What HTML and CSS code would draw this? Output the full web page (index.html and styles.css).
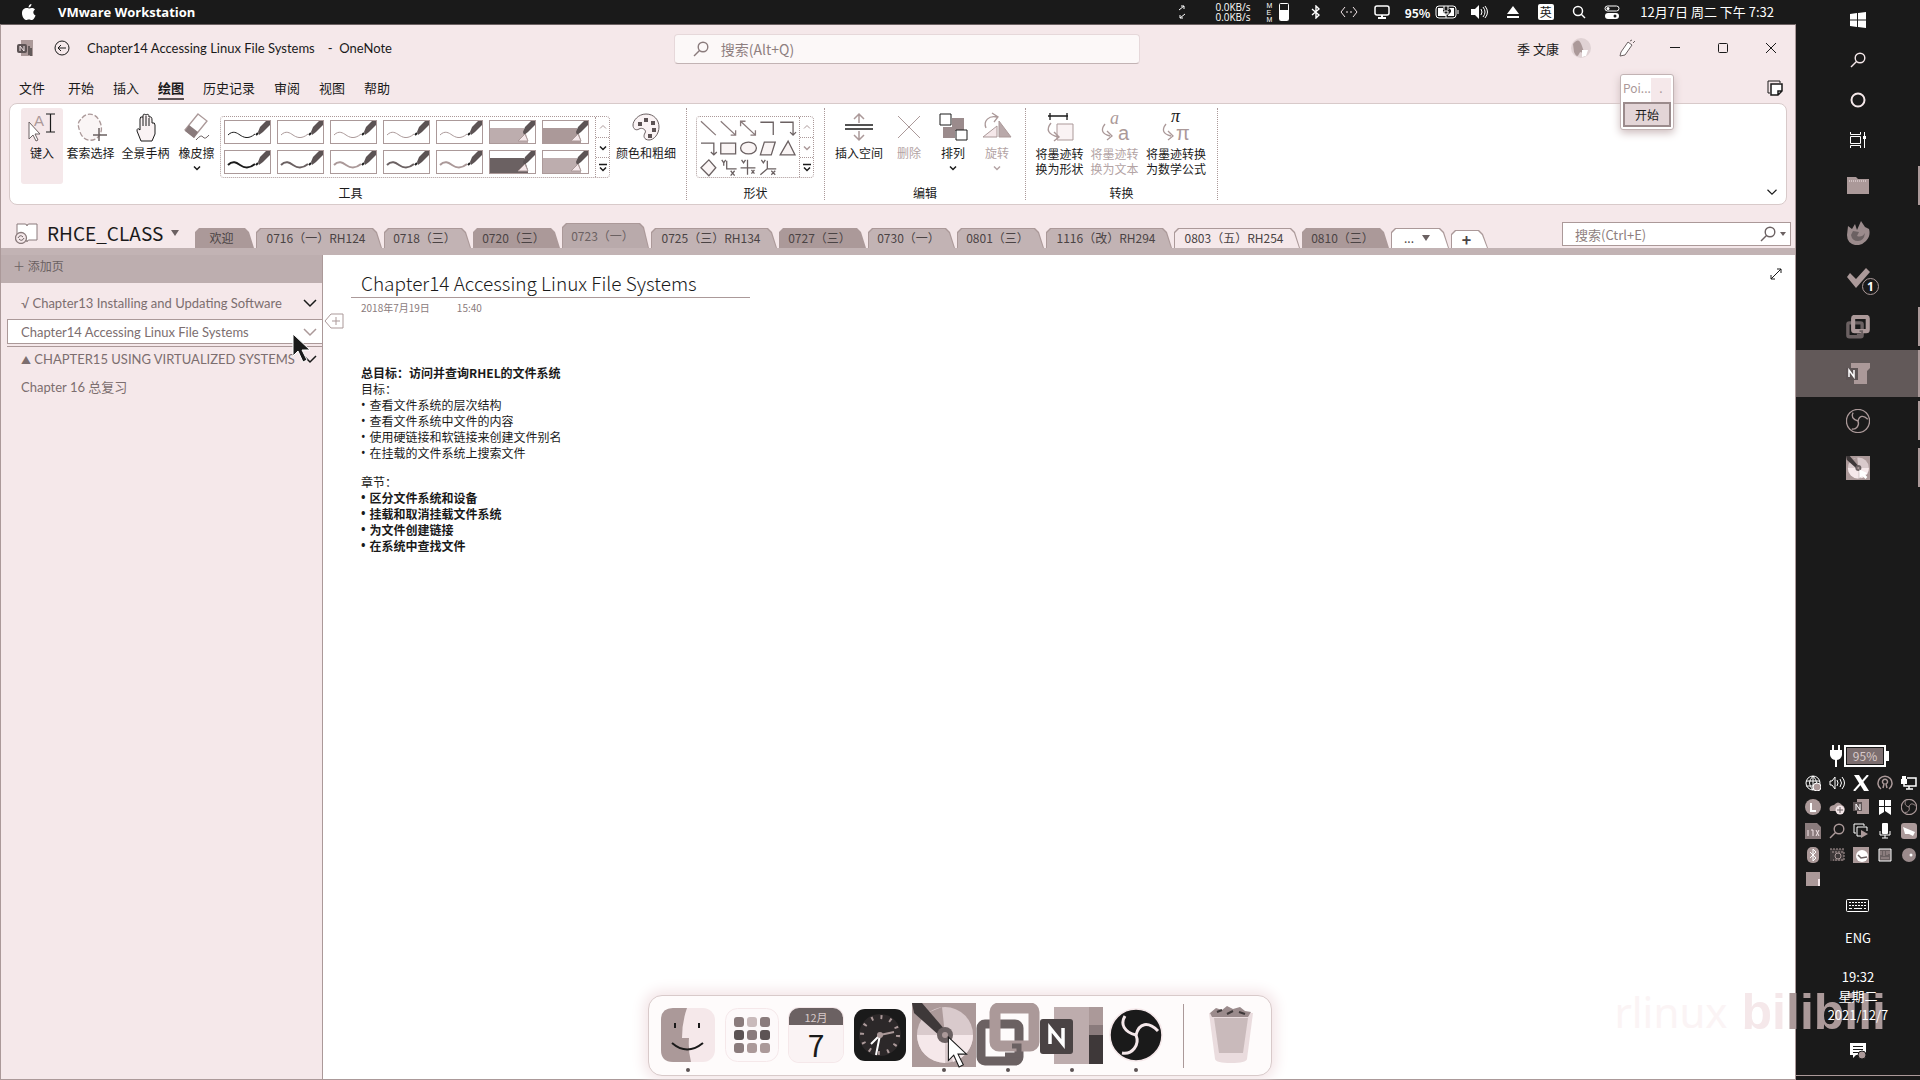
FILE: index.html
```html
<!DOCTYPE html>
<html lang="zh-CN">
<head>
<meta charset="utf-8">
<title>Chapter14 Accessing Linux File Systems - OneNote</title>
<link rel="stylesheet" href="styles.css">
</head>
<body>
<svg class="defs" aria-hidden="true">
  <symbol id="pen" viewBox="0 0 45 22"><path d="M3 14c5-5 9-2 12 0s8 5 15-1" fill="none" stroke="currentColor" stroke-width="var(--w,1)"/><path d="M33 11l2-5 7-7 3-1v6l-7 7-4 3z" fill="#5c5354"/><path d="M31 14l2-2" stroke="#1a1a1a" stroke-width="2"/></symbol>
  <symbol id="marker" viewBox="0 0 45 22"><path d="M0 7h34l4 12v3H0z" fill="currentColor"/><path d="M33 11l2-5 7-7 3-1v6l-7 7-4 3z" fill="#5c5354"/><path d="M28 20l7-7 3 7z" fill="#f5e8ea" stroke="#ab9999"/></symbol>
  <symbol id="down" viewBox="0 0 12 12"><path d="M3 4.500l3 3 3-3" fill="none" stroke="currentColor" stroke-width="1.500"/></symbol>
  <symbol id="up" viewBox="0 0 12 12"><path d="M3 7.500l3-3 3 3" fill="none" stroke="currentColor"/></symbol>
  <symbol id="more" viewBox="0 0 12 12"><path d="M2 2.500h8M3 5.500l3 3 3-3" fill="none" stroke="currentColor" stroke-width="1.500"/></symbol>
  <symbol id="glass" viewBox="0 0 16 16"><circle cx="10" cy="6" r="4.800" fill="none" stroke="currentColor" stroke-width="1.400"/><path d="M6.500 9.500L1 15" stroke="currentColor" stroke-width="1.400"/></symbol>
  <symbol id="chev" viewBox="0 0 16 16"><path d="M2 5l6 6 6-6" fill="none" stroke="currentColor" stroke-width="1.500"/></symbol>
  <symbol id="obs" viewBox="0 0 54 54"><circle cx="27" cy="27" r="26" fill="#1a1a1a" stroke="currentColor" stroke-width="var(--ring,1.500)"/><g fill="none" stroke="currentColor" stroke-width="3"><path d="M27 27C15 24 11 16 16 8"/><path d="M27 27C30 15 39 13 49 23"/><path d="M27 27C31 37 23 47 13 45"/></g></symbol>
  <symbol id="vm" viewBox="0 0 64 64"><rect x="5" y="21" width="38" height="37" rx="4" fill="none" stroke="#6b6162" stroke-width="9"/><rect x="19" y="5" width="39" height="38" rx="4" fill="none" stroke="#ab9999" stroke-width="11"/><path d="M36 43h7v9H29" fill="none" stroke="#6b6162" stroke-width="5"/></symbol>
  <symbol id="disc" viewBox="0 0 64 64"><path d="M0 0h64v64H0z" fill="#ab9999"/><circle cx="33" cy="32" r="28" fill="#d9cacc"/><path d="M33 32L5 32a28 28 0 0 0 28 28zM33 32h28a28 28 0 0 1-20 27z" fill="#f5e8ea"/><path d="M33 32L30 4 10 12z" fill="#ab9999"/><path d="M0 0h10l24 28-5 6L2 10z" fill="#3e3839"/><circle cx="33" cy="32" r="8" fill="#6b6162"/><circle cx="33" cy="32" r="3" fill="#ab9999"/></symbol>
  <symbol id="arrow" viewBox="0 0 20 30"><path d="M1 1v22l5-5 5 11 4-2-5-10h8z" fill="currentColor" stroke="var(--edge,#fff)" stroke-width="1"/></symbol>
</svg>
<div class="screen">
  <header class="menubar">
    <svg class="apple" viewBox="0 0 14 16"><path d="M9.500 0c0 2-1.300 3.400-3 3.400C6.400 1.600 8 .2 9.500 0zM7 4.500C8.300 4 11 3 13 5.500c-2.500 1.500-2 5 .6 6C12.500 14 11.300 16 9.800 16c-1.300 0-1.500-.6-2.900-.6s-1.700.6-2.900.6C2 16 0 12.300 0 9.300 0 4.500 4 3.300 7 4.500z" fill="#fff"/></svg>
    <strong class="app-name">VMware Workstation</strong>
    <div class="status">
      <svg width="10" height="14" viewBox="0 0 10 14"><path d="M2 5l5-4M4 1h3v3M8 9l-5 4M3 10v3h3" fill="none" stroke="#fff"/></svg>
      <div class="net"><span>0.0KB/s</span><span>0.0KB/s</span></div>
      <div class="mem"><span>M</span><span>E</span><span>M</span></div>
      <svg width="10" height="18" viewBox="0 0 10 18"><rect x=".5" y=".5" width="9" height="17" rx="1" fill="none" stroke="#fff"/><path d="M1 7h8v10H1z" fill="#fff"/></svg>
      <div class="slot first"><svg width="10" height="14" viewBox="0 0 10 14"><path d="M1 4l7 6-3 3V1l3 3-7 6" fill="none" stroke="#fff" stroke-width="1.400"/></svg></div>
      <div class="slot"><svg width="18" height="12" viewBox="0 0 18 12"><path d="M5 1L1 6l4 5M13 1l4 5-4 5M6 6h2M10 6h2" fill="none" stroke="#f5e8ea"/></svg></div>
      <div class="slot"><svg width="16" height="14" viewBox="0 0 16 14"><rect x="1" y="1" width="14" height="9" rx="2" fill="none" stroke="#fff" stroke-width="1.500"/><path d="M4 13h8M8 10v3" stroke="#fff" stroke-width="2"/></svg></div>
      <span class="pct">95%</span>
      <div class="slot"><svg width="24" height="14" viewBox="0 0 24 14"><rect x="1" y="1" width="20" height="12" rx="3" fill="none" stroke="#fff"/><path d="M3 3h5v4l3 3v1H3zM14 3h5v8h-6v-1l3-3V5z" fill="#fff"/><path d="M9 1v4M13 1v4M9 6h4v3H9zM11 9v4M23 5v4" stroke="#fff" fill="none"/></svg></div>
      <div class="slot"><svg width="18" height="14" viewBox="0 0 18 14"><path d="M0 4h4l4-4v14l-4-4H0z" fill="#fff"/><path d="M10 4q2 3 0 6M12 2q4 5 0 10M14 1q5 6 0 12" fill="none" stroke="#fff"/></svg></div>
      <div class="slot"><svg width="12" height="12" viewBox="0 0 12 12"><path d="M6 0l6 8H0zM0 10h12v2H0z" fill="#fff"/></svg></div>
      <div class="slot"><span class="ime">英</span></div>
      <div class="slot"><svg width="14" height="14" viewBox="0 0 14 14"><circle cx="6" cy="6" r="4.500" fill="none" stroke="#fff" stroke-width="1.500"/><path d="M9 9l4 4" stroke="#fff" stroke-width="1.500"/></svg></div>
      <div class="slot"><svg width="16" height="14" viewBox="0 0 16 14"><rect x="1" y="1" width="14" height="5" rx="2.500" fill="none" stroke="#fff"/><circle cx="4" cy="3.500" r="1.500" fill="#fff"/><rect x="1" y="8" width="14" height="6" rx="3" fill="#fff"/><circle cx="11" cy="11" r="1.500" fill="#1a1a1a"/></svg></div>
      <time class="date">12月7日 周二 下午 7:32</time>
    </div>
  </header>

  <div class="window">
    <div class="titlebar">
      <svg width="16" height="16" viewBox="0 0 16 16"><path d="M4 0h12v16H4z" fill="#ab9999"/><rect x="0" y="4" width="10" height="9" rx="2" fill="#5c5354"/><path d="M3 11V6l4 5V6" fill="none" stroke="#f5e8ea"/><path d="M12 6v9M14 8v8" stroke="#1a1a1a"/></svg>
      <button class="back" aria-label="返回"><svg width="16" height="16" viewBox="0 0 16 16"><circle cx="8" cy="8" r="7" fill="none" stroke="#1a1a1a"/><path d="M12 8H4M7 5L4 8l3 3" fill="none" stroke="#1a1a1a"/></svg></button>
      <span class="doc">Chapter14 Accessing Linux File Systems</span><span class="doc app">-&nbsp; OneNote</span>
      <label class="find"><svg width="16" height="16"><use href="#glass"/></svg><input type="text" placeholder="搜索(Alt+Q)" aria-label="搜索"></label>
      <div class="account">
        <span>季 文康</span>
        <svg width="20" height="20" viewBox="0 0 20 20"><circle cx="10" cy="10" r="10" fill="#e0d2d4"/><path d="M2 6q6-8 9 2t5 6l-3 5q-3-8-5-3T3 14z" fill="#ab9999"/><path d="M11 12l6 0-2 6-4 1z" fill="#fff"/></svg>
      </div>
      <div class="winbtns">
        <button aria-label="墨迹"><svg width="16" height="18" viewBox="0 0 16 18"><path d="M2 13L9 3l4 3-7 10-5 1zM11 2l2-1M14 4l2-2" fill="#fff" stroke="#6b6162"/></svg></button>
        <button aria-label="最小化"><svg width="10" height="10" viewBox="0 0 10 10"><path d="M0 4.500h10" stroke="#1a1a1a"/></svg></button>
        <button aria-label="最大化"><svg width="10" height="10" viewBox="0 0 10 10"><rect x=".5" y=".5" width="9" height="9" rx="1" fill="none" stroke="#1a1a1a"/></svg></button>
        <button aria-label="关闭"><svg width="10" height="10" viewBox="0 0 10 10"><path d="M0 0l10 10M10 0L0 10" stroke="#1a1a1a"/></svg></button>
      </div>
    </div>

    <nav class="menus">
      <button class="file">文件</button><button>开始</button><button>插入</button><button class="on">绘图</button><button>历史记录</button><button>审阅</button><button>视图</button><button>帮助</button>
      <svg class="notes" width="16" height="16" viewBox="0 0 16 16"><path d="M3 13H1V1h12v2" fill="none" stroke="#1a1a1a"/><path d="M4 4h11v7l-4 4H4zM11 15v-4h4" fill="#fff" stroke="#1a1a1a" stroke-width="1.500"/></svg>
    </nav>

    <section class="ribbon">
      <div class="group tools">
        <div class="row">
          <button class="cmd type"><svg viewBox="0 0 28 28"><text x="6" y="13" class="ia">A</text><path d="M18 1h9M22.500 1v18M18 19h9" stroke="#1a1a1a" stroke-width="1.200"/><path d="M1 9v17l4-4 3 6 2-1-3-6h5z" fill="#fff" stroke="#6b6162"/></svg><span>键入</span></button>
          <button class="cmd lasso"><svg viewBox="0 0 28 28"><path d="M5 5C10-1 18 0 22 7s3 14-2 18-14 3-17-6S1 9 5 5z" fill="#faf5f5" stroke="#ab9999" stroke-width="1.300" stroke-dasharray="5 2"/><path d="M22 15v13M16 22h14" stroke="#6b6162" stroke-width="1.500"/></svg><span>套索选择</span></button>
          <button class="cmd pan"><svg viewBox="0 0 28 28"><path d="M9 28l-4-10q0-4 3-1V6q0-3 3-2V3q0-3 3-1q3-2 3 2q3-1 3 3v3q3-1 3 2v9l-3 7z" fill="#faf3f4" stroke="#1a1a1a"/><path d="M11 4v9M14 3v10M17 5v8" stroke="#1a1a1a"/></svg><span>全景手柄</span></button>
          <button class="cmd erase"><svg viewBox="0 0 28 28"><path d="M15 1l9 7-13 16-9-7z" fill="#fff" stroke="#ab9999" stroke-width="1.300"/><path d="M6 12l9 7-4 6-9-7z" fill="#8a7b7c"/><path d="M13 27q5-6 7-3t6-2" fill="none" stroke="#6b6162"/></svg><span>橡皮擦</span><svg class="dd"><use href="#down"/></svg></button>
          <div class="gallery">
            <div class="pens">
              <button aria-label="笔 1" class="ink"><svg><use href="#pen"/></svg></button><button aria-label="笔 2"><svg><use href="#pen"/></svg></button><button aria-label="笔 3"><svg><use href="#pen"/></svg></button><button aria-label="笔 4"><svg><use href="#pen"/></svg></button><button aria-label="笔 5"><svg><use href="#pen"/></svg></button><button aria-label="荧光笔 1" class="soft"><svg><use href="#marker"/></svg></button><button aria-label="荧光笔 2"><svg><use href="#marker"/></svg></button>
              <button aria-label="笔 6" class="ink bold"><svg><use href="#pen"/></svg></button><button aria-label="笔 7" class="dim bold"><svg><use href="#pen"/></svg></button><button aria-label="笔 8" class="bold"><svg><use href="#pen"/></svg></button><button aria-label="笔 9" class="dim bold"><svg><use href="#pen"/></svg></button><button aria-label="笔 10" class="bold"><svg><use href="#pen"/></svg></button><button aria-label="荧光笔 3" class="dim"><svg><use href="#marker"/></svg></button><button aria-label="荧光笔 4" class="soft"><svg><use href="#marker"/></svg></button>
            </div>
            <div class="scroll"><button class="off" aria-label="向上"><svg><use href="#up"/></svg></button><button aria-label="向下"><svg><use href="#down"/></svg></button><button aria-label="更多"><svg><use href="#more"/></svg></button></div>
          </div>
          <button class="cmd color"><svg viewBox="0 0 28 28"><path d="M14 1c8 0 13 6 13 13S22 27 17 27s-6-4-4-7-3-6-6-4-6 0-6-4S6 1 14 1z" fill="#faf3f4" stroke="#6b6162"/><path d="M6 9h4v4H6zM12 5h4v4h-4zM19 8h4v4h-4zM20 15h4v4h-4zM16 21h4v4h-4z" fill="#5c5354"/></svg><span>颜色和粗细</span></button>
        </div>
        <h2>工具</h2>
      </div>
      <div class="group shapes">
        <div class="row">
          <div class="gallery">
            <svg class="shapeset" viewBox="0 0 103 60" fill="none" stroke="#6b6162" stroke-width="1.300">
              <path d="M4 4l15 14M24 4l15 14m0-5v5h-5M44 4l15 14m0-5v5h-5M44 9V4h5" stroke="#8a7b7c"/>
              <path d="M64 5h13v13M84 5h13v13m-3-3l3 3 3-3M4 26h13v12m-3-3l3 3 3-3"/>
              <path d="M24 26h15v11H24zM68 25h11l-4 13H64zM84 38l8-14 7 14z" fill="#faf5f5"/><ellipse cx="52" cy="31" rx="8" ry="6" fill="#faf5f5"/>
              <path d="M4 51l8-8 7 8-7 8z" fill="#faf5f5"/><path d="M30 44v8h10M51 43v15M44 51h15M71 44v8h9M71 52l-7 6M25 43l2 3 2-3m-2 3v3M34 54l4 5m0-5l-4 5M45 43l2 3 2-3M55 53l3 4m0-4l-3 4M65 43l2 3 2-3M75 54l4 4m0-4l-4 4"/>
            </svg>
            <div class="scroll"><button class="off" aria-label="向上"><svg><use href="#up"/></svg></button><button class="off" aria-label="向下"><svg><use href="#down"/></svg></button><button aria-label="更多"><svg><use href="#more"/></svg></button></div>
          </div>
        </div>
        <h2>形状</h2>
      </div>
      <div class="group edit">
        <div class="row">
          <button class="cmd wide"><svg viewBox="0 0 28 28"><path d="M0 12h28M0 16h28" stroke="#1a1a1a" stroke-width="1.300"/><path d="M14 10V1M9 6l5-5 5 5M14 18v9M9 22l5 5 5-5" fill="none" stroke="#ab9999" stroke-width="1.500"/></svg><span>插入空间</span></button>
          <button class="cmd" disabled><svg viewBox="0 0 28 28"><path d="M3 3l22 22M25 3L3 25" stroke="#ab9999"/></svg><span>删除</span></button>
          <button class="cmd"><svg viewBox="0 0 28 28"><path d="M13 5h12v13H13zM4 14h12v11H4z" fill="#9b8b8c"/><path d="M1 1h11v11H1zM17 17h11v10H17z" fill="#fff" stroke="#1a1a1a"/></svg><span>排列</span><svg class="dd"><use href="#down"/></svg></button>
          <button class="cmd" disabled><svg viewBox="0 0 28 28"><path d="M16 8v16h12z" fill="#b9a9aa" stroke="#ab9999"/><path d="M14 13v11H0z" fill="#f5e8ea" stroke="#ab9999"/><path d="M3 15C0 8 6 2 14 4M9 0l6 4-4 5" fill="none" stroke="#ab9999" stroke-width="1.300"/></svg><span>旋转</span><svg class="dd"><use href="#down"/></svg></button>
        </div>
        <h2>编辑</h2>
      </div>
      <div class="group convert">
        <div class="row">
          <button class="cmd"><svg viewBox="0 0 28 28"><path d="M2 3h20M4 0v7M21 0v7" stroke="#1a1a1a" stroke-width="1.300"/><path d="M11 11h16v16H11z" fill="#faf3f4" stroke="#ab9999"/><path d="M5 10Q-3 20 12 24M8 19l5 5-5 4" fill="none" stroke="#ab9999" stroke-width="1.400"/></svg><span>将墨迹转<br>换为形状</span></button>
          <button class="cmd" disabled><svg viewBox="0 0 28 28"><text x="9" y="11" class="ai">a</text><text x="17" y="27" class="an">a</text><path d="M4 11Q-3 20 9 23M6 18l5 5-5 4" fill="none" stroke="#ab9999" stroke-width="1.300"/></svg><span>将墨迹转<br>换为文本</span></button>
          <button class="cmd last"><svg viewBox="0 0 28 28"><text x="9" y="9" class="ai dark">π</text><text x="14" y="27" class="an">π</text><path d="M4 11Q-3 20 9 23M6 18l5 5-5 4" fill="none" stroke="#ab9999" stroke-width="1.300"/></svg><span>将墨迹转换<br>为数学公式</span></button>
        </div>
        <h2>转换</h2>
      </div>
      <button class="collapse" aria-label="折叠功能区"><svg width="12" height="12"><use href="#chev"/></svg></button>
    </section>

    <div class="sections">
      <button class="book"><svg width="24" height="22" viewBox="0 0 24 22"><path d="M2 2h8q2 0 2 2 0-2 2-2h8v16h-8q-2 0-2 2 0-2-2-2H2z" fill="#fff" stroke="#8a7b7c"/><circle cx="6" cy="16" r="5.500" fill="#f5e8ea" stroke="#8a7b7c" stroke-width="1.300"/><path d="M3 16q2-4 5-1M9 16q-2 4-5 1" fill="none" stroke="#6b6162"/></svg><span>RHCE_CLASS</span><i class="tri"></i></button>
      <nav class="tabs">
        <button class="t first deep">欢迎</button><button class="t long">0716（一）RH124</button><button class="t">0718（三）</button><button class="t deep">0720（三）</button><button class="t cur">0723（一）</button><button class="t long">0725（三）RH134</button><button class="t deep">0727（三）</button><button class="t">0730（一）</button><button class="t">0801（三）</button><button class="t long">1116（改）RH294</button><button class="t long light">0803（五）RH254</button><button class="t deep">0810（三）</button><button class="t overflow">...<i class="tri"></i></button><button class="t add" aria-label="新建分区">+</button>
      </nav>
      <label class="search"><input type="text" placeholder="搜索(Ctrl+E)" aria-label="搜索笔记"><svg width="16" height="16"><use href="#glass"/></svg><i class="tri small"></i></label>
    </div>

    <div class="body">
      <aside class="pages">
        <button class="addpage">＋ 添加页</button>
        <ul>
          <li><a href="#p13">√ Chapter13 Installing and Updating Software</a><svg><use href="#chev"/></svg></li>
          <li class="sel"><a href="#p14">Chapter14 Accessing Linux File Systems</a><svg><use href="#chev"/></svg></li>
          <li><a href="#p15"><small>▲</small> CHAPTER15 USING VIRTUALIZED SYSTEMS</a><svg><use href="#chev"/></svg></li>
          <li><a href="#p16">Chapter 16 总复习</a></li>
        </ul>
        <svg class="pointer"><use href="#arrow"/></svg>
      </aside>
      <main class="page">
        <svg class="pagetag" viewBox="0 0 20 16"><path d="M1 8l6-7h12v14H7z" fill="#fff" stroke="#ab9999"/><path d="M12 4v8M8 8h8" stroke="#ab9999"/></svg>
        <svg class="expand" viewBox="0 0 12 12"><path d="M1 11L11 1M7 1h4v4M1 7v4h4" fill="none" stroke="#1a1a1a"/></svg>
        <h1>Chapter14 Accessing Linux File Systems</h1>
        <p class="when"><span>2018年7月19日</span><span>15:40</span></p>
        <div class="note">
          <p><b>总目标：访问并查询RHEL的文件系统</b></p>
          <p>目标：</p>
          <ul><li>查看文件系统的层次结构</li><li>查看文件系统中文件的内容</li><li>使用硬链接和软链接来创建文件别名</li><li>在挂载的文件系统上搜索文件</li></ul>
          <p class="gap">章节：</p>
          <ul class="strong"><li>区分文件系统和设备</li><li>挂载和取消挂载文件系统</li><li>为文件创建链接</li><li>在系统中查找文件</li></ul>
        </div>
      </main>
    </div>

    <div class="pop"><div class="poptitle"><span>Poi...</span><i>.</i></div><button>开始</button></div>
  </div>

  <aside class="taskbar">
    <div class="launch">
      <button aria-label="开始"><svg width="16" height="16" viewBox="0 0 16 16"><path d="M0 2l7-1v6.500H0zM8 1l8-1v7.500H8zM0 8.500h7V15l-7-1zM8 8.500h8V16l-8-1z" fill="#fff"/></svg></button>
      <button aria-label="搜索"><svg width="16" height="16"><use href="#glass"/></svg></button>
      <button aria-label="Cortana"><svg width="16" height="16" viewBox="0 0 16 16"><circle cx="8" cy="8" r="6.500" fill="none" stroke="#f5e8ea" stroke-width="2"/></svg></button>
      <button aria-label="任务视图"><svg width="16" height="16" viewBox="0 0 16 16"><path d="M.5 4.500h10v7H.5zM.5 0v2.500h10V0M.5 16v-2.500h10V16M14.500 0v16" fill="none" stroke="#fff"/><path d="M13 4h3v3h-3z" fill="#fff"/></svg></button>
    </div>
    <div class="apps">
      <button class="run" aria-label="文件资源管理器"><svg viewBox="0 0 24 24"><path d="M1 3h9l2 2h11v15H1z" fill="#ab9999"/><path d="M3 7h18" stroke="#f5e8ea" stroke-dasharray="1 1"/></svg></button>
      <button aria-label="Firefox"><svg viewBox="0 0 24 24"><path d="M2 5l4 3 3-5 2 6 4-9 4 6 4 2q2 7-3 12t-11 4Q1 22 1 14z" fill="#9b8b8c"/><path d="M7 10l6 1-2 4q5 2 8-3-1 8-7 8t-7-6z" fill="#6b6162"/></svg></button>
      <button aria-label="待办"><svg viewBox="0 0 24 24"><path d="M1 9l3-4 6 6L20 0l4 4-14 16z" fill="#ab9999"/></svg><span class="badge">1</span></button>
      <button class="run" aria-label="VMware"><svg viewBox="0 0 64 64"><use href="#vm"/></svg></button>
      <button class="run active" aria-label="OneNote"><svg viewBox="0 0 24 24"><path d="M5 1h19v5l-3 3v13H8V9H5z" fill="#ab9999"/><path d="M0 6h12v12H0z" fill="#5c5354"/><path d="M3 15V8l5 7V8" fill="none" stroke="#fff" stroke-width="1.500"/></svg></button>
      <button class="run ring" aria-label="OBS"><svg><use href="#obs"/></svg></button>
      <button class="run" aria-label="光盘"><svg viewBox="0 0 64 64"><use href="#disc"/><path d="M36 36v22l8-5 8 8 5-5-7-7 8-3z" fill="#fff"/></svg></button>
    </div>
    <div class="tray">
      <div class="power"><svg width="12" height="22" viewBox="0 0 12 22"><path d="M3 0v5M9 0v5M6 14v8" stroke="#fff" stroke-width="2"/><path d="M0 5h12v5q-1 5-6 5T0 10z" fill="#fff"/></svg><span class="batt">95%</span></div>
      <div class="icons">
        <svg viewBox="0 0 16 16"><circle cx="8" cy="8" r="7" fill="none" stroke="#fff"/><path d="M8 1v14M1 6h14M1 11h10M8 1q-7 7 0 14M8 1q7 7 0 14" fill="none" stroke="#fff"/><circle cx="12" cy="12" r="4" fill="#ab9999" stroke="#fff"/></svg>
        <svg viewBox="0 0 16 16"><path d="M1 6h2l3-4v12l-3-4H1zM8 5q2 3 0 6M11 4q3 4 0 8M13 2q5 6 0 12" fill="none" stroke="#fff"/></svg>
        <svg viewBox="0 0 16 16"><path d="M1 0h5l10 16h-5z" fill="#fff"/><path d="M15 0L1 16" stroke="#fff" stroke-width="2"/></svg>
        <svg viewBox="0 0 16 16"><path d="M4 14A7 7 0 1 1 12 14M6 13l1-4a2.500 2.500 0 1 1 2 0l1 4" fill="none" stroke="#ab9999" stroke-width="1.500"/></svg>
        <svg viewBox="0 0 16 16"><path d="M6 3h9v8H3V9M8 11v3M5 14h7" fill="none" stroke="#fff" stroke-width="1.500"/><path d="M0 4h6v5H0zM1 4V1h4v3" fill="#fff"/></svg>
        <svg viewBox="0 0 16 16"><circle cx="8" cy="8" r="8" fill="#ab9999"/><path d="M6 4v8h5" fill="none" stroke="#fff" stroke-width="2"/></svg>
        <svg viewBox="0 0 16 16"><path d="M1 12q-2-5 4-6 4-5 8 0 4 2 2 6z" fill="#ab9999"/><circle cx="11" cy="11" r="4.500" fill="#f5e8ea"/><path d="M8 11h6M11 8v6" stroke="#6b6162"/></svg>
        <svg viewBox="0 0 16 16"><path d="M4 0h12v15H4z" fill="#ab9999"/><path d="M0 3h9v9H0z" fill="#5c5354"/><path d="M3 11V5l4 6V5" fill="none" stroke="#fff"/></svg>
        <svg viewBox="0 0 16 16"><path d="M2 1h5v6H2zM8 1h6v6H8zM2 8h5v5l-5 3zM8 8h6v8l-6-4z" fill="#fff"/></svg>
        <svg class="gray"><use href="#obs"/></svg>
        <svg viewBox="0 0 16 16"><path d="M0 0h12l4 4v12H0z" fill="#8a7b7c"/><path d="M3 7v6M6 7h2v6M11 7l3 6M14 7l-3 6" fill="none" stroke="#f5e8ea"/></svg>
        <svg class="gray"><use href="#glass"/></svg>
        <svg viewBox="0 0 16 16"><path d="M3 10H1V1h10v2M5 13h-1V4h10v4M8 13l-3 0" fill="none" stroke="#fff"/><path d="M8 7l7 4-7 4z" fill="#ab9999"/></svg>
        <svg viewBox="0 0 16 16"><rect x="5" y="0" width="6" height="11" rx="1" fill="#fff"/><path d="M3 8v4h10V8M8 12v3M5 15h6" fill="none" stroke="#fff"/></svg>
        <svg viewBox="0 0 16 16"><rect width="16" height="16" rx="3" fill="#ab9999"/><path d="M2 4l12 5-2 4-4-2-4 0z" fill="#fff"/></svg>
        <svg viewBox="0 0 16 16"><rect x="2" width="12" height="16" rx="5" fill="#ab9999"/><path d="M5 5l6 6-3 3V2l3 3-6 6" fill="none" stroke="#fff"/></svg>
        <svg viewBox="0 0 16 16"><path d="M1 2h14v12H1z" fill="#3e3839"/><path d="M1 2h14M3 5h12v8H4" fill="none" stroke="#ab9999" stroke-dasharray="2 1"/><circle cx="9" cy="9" r="3" fill="none" stroke="#ab9999"/></svg>
        <svg viewBox="0 0 16 16"><path d="M0 0h16v16H0z" fill="#ab9999"/><circle cx="9" cy="9" r="6" fill="#fff"/><path d="M5 8l3 3 6-1" fill="none" stroke="#6b6162" stroke-width="1.500"/></svg>
        <svg viewBox="0 0 16 16"><path d="M2 2h12v12H2z" fill="#6b6162" stroke="#fff"/><path d="M4 4v4M7 4v5M10 4v4M12 4v3M4 11h8" stroke="#ab9999"/></svg>
        <svg viewBox="0 0 16 16"><circle cx="8" cy="8" r="7" fill="#9b8b8c"/><circle cx="10" cy="8" r="1.500" fill="#fff"/></svg>
        <svg viewBox="0 0 16 16"><path d="M1 1h14v14H1z" fill="#ab9999"/><path d="M13 8h2v7h-2z" fill="#f5e8ea"/></svg>
      </div>
      <svg class="kbd" viewBox="0 0 24 14"><rect x=".5" y=".5" width="22" height="12" rx="1" fill="none" stroke="#fff"/><path d="M3 3.500h17M3 6.500h17" stroke="#fff" stroke-dasharray="2 1"/><path d="M3 9.500h3M8 9.500h8M18 9.500h2" stroke="#fff"/></svg>
      <span class="lang">ENG</span>
      <time class="clock"><span>19:32</span><span>星期二</span><span>2021/12/7</span></time>
      <svg class="action" viewBox="0 0 16 16"><path d="M0 0h16v12H6l-3 3v-3H0z" fill="#fff"/><path d="M3 3.500h10M3 6.500h10M3 9.500h6" stroke="#1a1a1a"/><circle cx="12" cy="12" r="4" fill="#ab9999" stroke="#1a1a1a"/></svg>
    </div>
  </aside>

  <div class="watermark"><span class="user">rlinux</span><span class="brand"><span class="pale">bi</span>libili</span></div>

  <nav class="dock">
    <button class="dot" aria-label="访达"><svg width="54" height="54" viewBox="0 0 54 54"><rect width="54" height="54" rx="12" fill="#f5e8ea"/><path d="M12 0h14q-5 14-5 30h7q-1 12 2 24H12Q0 54 0 42V12Q0 0 12 0z" fill="#ab9999"/><path d="M14 15v5M38 15v5" stroke="#1a1a1a" stroke-width="2"/><path d="M11 35q15 13 31 0" fill="none" stroke="#1a1a1a" stroke-width="2"/></svg></button>
    <button aria-label="启动台"><svg width="54" height="54" viewBox="0 0 54 54"><rect x=".5" y=".5" width="53" height="53" rx="12" fill="#fdf9fa" stroke="#f5e8ea"/><g fill="#8a7b7c"><rect x="9" y="9" width="10" height="10" rx="3"/><rect x="22" y="9" width="10" height="10" rx="3" fill="#c9babb"/><rect x="35" y="9" width="10" height="10" rx="3"/><rect x="9" y="22" width="10" height="10" rx="3" fill="#5c5354"/><rect x="22" y="22" width="10" height="10" rx="3"/><rect x="35" y="22" width="10" height="10" rx="3" fill="#5c5354"/><rect x="9" y="35" width="10" height="10" rx="3"/><rect x="22" y="35" width="10" height="10" rx="3" fill="#ab9999"/><rect x="35" y="35" width="10" height="10" rx="3" fill="#ab9999"/></g></svg></button>
    <button class="cal" aria-label="日历"><small>12月</small><b>7</b></button>
    <button aria-label="时钟"><svg width="54" height="54" viewBox="0 0 54 54"><rect x="1" y="1" width="52" height="52" rx="11" fill="#1a1a1a"/><circle cx="27" cy="27" r="21" fill="#2c2829"/><circle cx="27" cy="27" r="18" fill="none" stroke="#ab9999" stroke-width="4" stroke-dasharray="2 7.420"/><path d="M27 27l-9 9M27 27l-4 20" stroke="#fff" stroke-width="2"/><path d="M27 27l14-3" stroke="#ab9999" stroke-width="2"/><circle cx="27" cy="27" r="3" fill="#ab9999"/></svg></button>
    <button class="dot" aria-label="光盘"><svg width="64" height="64"><use href="#disc"/></svg></button>
    <button class="dot" aria-label="VMware"><svg width="64" height="64"><use href="#vm"/></svg></button>
    <button class="dot" aria-label="OneNote"><svg width="64" height="64" viewBox="0 0 64 64"><path d="M14 4h49v57H14z" fill="#bdacad"/><path d="M49 4h14v18H49z" fill="#ab9999"/><path d="M49 22h14v10H49z" fill="#8a7b7c"/><path d="M49 32h14v29H49z" fill="#3e3839"/><rect x="0" y="16" width="33" height="35" rx="3" fill="#4a4344"/><path d="M10 41V25l13 16V25" fill="none" stroke="#fff" stroke-width="3.500"/></svg></button>
    <button class="dot" aria-label="OBS"><svg class="bigobs" width="54" height="54"><use href="#obs"/></svg></button>
    <i class="rule"></i>
    <button class="trash" aria-label="废纸篓"><svg width="46" height="60" viewBox="0 0 46 60"><path d="M1 8h44l-6 46q-1 4-16 4T7 54z" fill="#eadcde"/><path d="M6 13h34l-5 35H11z" fill="#c9babb"/><path d="M2 8l6-5 6 2 5-4 6 3 7-2 5 4 6 1-3 5H4z" fill="#9b8b8c"/><path d="M9 7l5-2M19 9l6-3M31 7l6 2" stroke="#3e3839" stroke-width="2"/></svg></button>
    <svg class="pointer"><use href="#arrow"/></svg>
  </nav>
</div>
</body>
</html>
```
FILE: styles.css
```css
:root {
  --black: #1a1a1a;
  --mauve: #ab9999;
  --pink: #f5e8ea;
  --strip: #c2b3b4;
}
* { box-sizing: border-box; }
body {
  margin: 0;
  font-family: "Noto Sans CJK SC", "Noto Sans", sans-serif;
  font-size: 12px;
  color: var(--black);
}
button {
  margin: 0;
  padding: 0;
  border: 0;
  background: none;
  font: inherit;
  color: inherit;
}
input { border: 0; background: none; font: inherit; outline: 0; min-width: 0; }
input::placeholder { color: #8f7f80; opacity: 1; }
h1, h2, p, ul { margin: 0; padding: 0; font-weight: 400; }
svg { display: block; flex: none; }
.defs { position: absolute; width: 0; height: 0; }
.screen {
  position: relative;
  display: grid;
  grid-template-columns: 1fr 124px;
  grid-template-rows: 24px 1fr;
  min-height: 100vh;
  background: var(--black);
  overflow: hidden;
}

/* menu bar */
.menubar { display: flex; align-items: center; padding: 0 22px 0 22px; color: #fff; white-space: nowrap; }
.apple { width: 14px; height: 16px; margin-right: 22px; }
.app-name { font: 700 13px "Open Sans", sans-serif; }
.status { display: flex; align-items: center; margin-left: auto; }
.net { display: grid; margin-left: 28px; font: 10px/10px "Open Sans", sans-serif; }
.mem { display: grid; margin: 0 7px 0 16px; font: 7px/7px "Liberation Sans", sans-serif; }
.slot { width: 33px; display: flex; justify-content: center; }
.slot.first { margin-left: 10px; }
.pct { width: 32px; text-align: right; font: 700 12px "Noto Sans CJK SC", sans-serif; }
.ime { width: 16px; height: 16px; border-radius: 2px; background: #fff; color: var(--black); font-size: 12px; line-height: 15px; text-align: center; }
.date { margin-left: 12px; font-size: 13px; line-height: 20px; }

/* window */
.window {
  position: relative;
  display: flex;
  flex-direction: column;
  min-width: 0;
  background: var(--pink);
  border: 1px solid var(--mauve);
  border-top-color: #6b6162;
}
.titlebar { display: flex; align-items: center; height: 46px; padding-left: 16px; position: relative; }
.back { margin: 0 17px 0 21px; }
.doc { font: 13px Lato, "Noto Sans CJK SC", sans-serif; white-space: pre; }
.app { margin-left: 13px; }
.find {
  position: absolute;
  left: 37.5%;
  width: 26%;
  height: 30px;
  top: 9px;
  display: flex;
  align-items: center;
  gap: 12px;
  padding: 0 18px;
  border: 1px solid #e6d8da;
  border-bottom-color: #c2b3b4;
  border-radius: 4px;
  background: #fcf8f8;
  color: #8a7b7c;
  font-size: 14px;
}
.find input { flex: 1; padding: 0; }
.account { display: flex; align-items: center; gap: 12px; margin-left: auto; font-size: 13px; }
.winbtns { display: flex; align-items: center; margin-left: 12px; }
.winbtns button { width: 48px; display: flex; justify-content: center; }
.menus { display: flex; align-items: center; gap: 19px; height: 32px; padding: 2px 12px 0 18px; font-size: 13px; }
.menus button { height: 24px; line-height: 20px; }
.menus .file { margin-right: 4px; }
.menus .on { font-weight: 700; box-shadow: inset 0 -2px #5c5354; }
.notes { margin-left: auto; }

/* ribbon */
.ribbon {
  position: relative;
  display: flex;
  height: 102px;
  margin: 0 8px;
  padding: 4px 0 0;
  background: #fff;
  border: 1px solid #d8caca;
  border-radius: 8px;
}
.group { flex: none; height: 92px; border-right: 1px dotted var(--mauve); }
.tools { width: 677px; padding: 0 6px 0 11px; }
.shapes { width: 138px; padding: 0 9px; }
.edit { width: 201px; padding-left: 6px; padding-right: 6px; }
.convert { width: 192px; padding-left: 6px; padding-right: 6px; }
.row { display: flex; height: 77px; }
.group h2 { font-size: 12px; line-height: 16px; text-align: center; }
.cmd { flex: none; display: flex; flex-direction: column; align-items: center; width: 44px; height: 76px; padding-top: 5px; line-height: 18px; white-space: nowrap; border-radius: 3px; }
.cmd svg { width: 28px; height: 28px; margin-bottom: 3px; overflow: visible; }
.cmd .dd { width: 12px; height: 12px; margin: 0; }
.cmd:disabled { color: #b3a3a4; }
.cmd.type { width: 42px; background: var(--pink); }
.cmd.lasso, .cmd.pan { width: 55px; }
.cmd.erase { width: 47px; }
.cmd.color { width: 68px; margin-left: 2px; }
.cmd.wide { width: 56px; }
.ia { font: 15px "Liberation Sans", sans-serif; fill: #ab9999; }
.ai { font: italic 18px "Liberation Serif", serif; fill: #ab9999; }
.ai.dark { fill: #1a1a1a; }
.an { font: 20px "Liberation Sans", sans-serif; fill: #ab9999; }
.convert .cmd { width: 55px; line-height: 15px; }
.convert .cmd.last { width: 68px; }
.convert .cmd svg { margin-bottom: 5px; }
.gallery { display: flex; height: 62px; margin-top: 8px; border: 1px dotted var(--mauve); border-radius: 4px; }
.pens { display: grid; grid-template-columns: repeat(7, 47px); grid-auto-rows: 24px; gap: 6px; padding: 3px 6px 3px 3px; }
.pens button { border: 1px solid var(--mauve); color: var(--mauve); }
.pens svg { width: 45px; height: 22px; }
.pens .ink { color: var(--black); }
.pens .dim { color: #6b6162; }
.pens .soft { color: #bdadae; }
.pens .bold { --w: 2; }
.scroll { display: grid; grid-template-rows: repeat(3, 20px); width: 14px; border-left: 1px dotted var(--mauve); }
.scroll button + button { border-top: 1px dotted var(--mauve); }
.scroll button { display: grid; place-items: center; }
.scroll svg { width: 12px; height: 12px; }
.scroll .off { color: var(--mauve); }
.shapeset { width: 102px; height: 60px; }
.collapse { margin: auto 8px 6px auto; }

/* notebook row */
.sections { display: flex; align-items: flex-end; height: 50px; padding-right: 4px; border-bottom: 7px solid var(--strip); }
.book { display: flex; align-items: center; gap: 8px; width: 194px; padding-left: 14px; height: 30px; font-size: 19px; line-height: 28px; }
.tri { border: 4px solid transparent; border-top: 6px solid #6b6162; border-bottom: 0; }
.tri.small { border-width: 4px 3px 0; }
.tabs { display: flex; align-items: flex-end; gap: 2px; }
.t, .t::before { clip-path: polygon(0 4px, 4px 0, calc(100% - 9px) 0, calc(100% - 5px) 4px, 100% 100%, 0 100%); }
.t {
  position: relative;
  isolation: isolate;
  flex: none;
  width: 87px;
  height: 20px;
  padding-right: 6px;
  background: var(--mauve);
  color: #4a4344;
  font-size: 12px;
  line-height: 20px;
  white-space: nowrap;
}
.t::before { content: ""; position: absolute; z-index: -1; inset: 1px 1px 0; background: var(--strip); }
.t.first { width: 59px; }
.t.long { width: 126px; }
.t.deep::before { background: var(--mauve); }
.t.cur { height: 25px; color: #6b6162; }
.t.cur::before { background: #b9aaab; }
.t.light::before { background: var(--pink); }
.t.overflow { width: 58px; display: flex; align-items: center; justify-content: center; gap: 8px; }
.t.overflow::before, .t.add::before { background: #fff; }
.t.add { width: 37px; height: 18px; font-size: 16px; line-height: 18px; font-weight: 700; }
.search {
  display: flex;
  align-items: center;
  gap: 4px;
  width: 229px;
  height: 24px;
  margin: 0 0 2px auto;
  padding: 0 4px 0 12px;
  border: 1px solid var(--mauve);
  background: #fff;
  color: #6b6162;
  font-size: 13px;
}
.search input { flex: 1; padding: 0; }

.body { display: flex; flex: 1; }
.pages { position: relative; width: 322px; border-right: 1px solid var(--mauve); }
.addpage { display: block; width: 100%; height: 28px; padding: 0 0 6px 12px; background: #bdaeaf; color: #6b6162; text-align: left; line-height: 20px; }
.pages ul { list-style: none; padding-top: 6px; }
.pages li { display: flex; align-items: center; height: 28px; margin-left: 6px; padding: 0 4px 0 14px; }
.pages li svg { width: 16px; height: 16px; margin-left: auto; }
.pages a { color: #7c6e6f; font: 13px/20px Lato, "Noto Sans CJK SC", sans-serif; text-decoration: none; white-space: nowrap; }
.pages small { font-size: 10px; }
.pages .sel { height: 25px; margin-top: 2px; margin-bottom: 1px; padding-left: 13px; background: #fff; border: 1px solid var(--mauve); border-right: 0; box-shadow: 0 2px var(--pink), 0 3px var(--mauve); }
.sel svg { color: var(--mauve); }
.pointer { position: absolute; width: 20px; height: 30px; }
.pages .pointer { left: 291px; top: 78px; color: var(--black); }
.page { position: relative; flex: 1; padding: 14px 0 0 38px; background: #fff; }
.pagetag { position: absolute; left: 1px; top: 58px; width: 20px; height: 16px; }
.expand { position: absolute; right: 13px; top: 13px; width: 12px; height: 12px; }
.page h1 { width: 399px; margin-left: -10px; padding-left: 10px; border-bottom: 1px solid var(--mauve); font-size: 19px; font-weight: 300; line-height: 28px; white-space: nowrap; }
.when { display: flex; gap: 27px; color: #8a7b7c; font-size: 10px; line-height: 16px; padding-top: 2px; }
.note { margin-top: 49px; line-height: 16px; }
.note ul { list-style: none; }
.note li { display: flex; gap: 4px; }
.note li::before { content: "•"; font-family: "Noto Sans", sans-serif; }
.gap { margin-top: 13px; }
.strong { font-weight: 700; }

.pop { position: absolute; right: 121px; top: 49px; width: 54px; padding: 3px 2px 2px; background: #fff; border: 1px solid #c2b3b4; border-radius: 3px; box-shadow: 0 3px 8px #cdbcbd; }
.poptitle { display: flex; justify-content: space-between; height: 24px; color: var(--mauve); line-height: 20px; }
.poptitle i { width: 20px; background: var(--pink); font-style: normal; text-align: center; }
.pop button { display: block; width: 100%; height: 25px; border: 2px solid #9b8b8c; background: #e3d5d7; font-size: 12px; }

/* side taskbar */
.taskbar { grid-column: 2; grid-row: 1 / 3; display: flex; flex-direction: column; color: #fff; }
.launch { display: grid; grid-auto-rows: 40px; color: #f5e8ea; }
.launch button, .apps button { position: relative; display: grid; place-items: center; }
.apps { display: grid; grid-auto-rows: 47px; margin-top: 2px; }
.apps svg { width: 24px; height: 24px; }
.apps .run::after { content: ""; position: absolute; right: 0; top: 4px; bottom: 4px; width: 2px; background: var(--mauve); }
.apps .active { background: #625959; }
.apps .active::after { top: 0; bottom: 0; }
.ring { color: var(--mauve); --ring: 3; }
.badge { position: absolute; left: 66px; top: 22px; width: 17px; height: 17px; border: 1px solid var(--mauve); border-radius: 50%; background: var(--black); font: 700 12px/15px "Noto Sans", sans-serif; text-align: center; }
.tray { display: flex; flex-direction: column; align-items: center; margin-top: auto; border-bottom: 1px solid var(--mauve); margin-bottom: 4px; }
.power { display: flex; align-items: center; gap: 2px; }
.batt { position: relative; width: 42px; height: 22px; border: 2px solid #fff; outline: 1px solid var(--black); outline-offset: -3px; background: #7c6e6f; color: #d8caca; font-size: 12px; line-height: 17px; text-align: center; }
.batt::after { content: ""; position: absolute; right: -5px; top: 4px; width: 3px; height: 10px; background: #fff; }
.icons { display: grid; grid-template-columns: repeat(5, 16px); gap: 8px; margin: 8px 0 0 6px; }
.icons svg { width: 16px; height: 16px; }
.gray { color: var(--mauve); --ring: 4; }
.kbd { width: 24px; height: 14px; margin: 12px 0; }
.lang { margin-top: 4px; font-size: 13px; line-height: 18px; }
.clock { display: grid; position: relative; z-index: 3; margin-top: 20px; font-size: 13px; line-height: 19px; text-align: center; }
.action { width: 16px; height: 16px; margin: 19px 0 16px; }

.watermark { position: absolute; right: 34px; bottom: 30px; display: flex; align-items: center; gap: 14px; z-index: 2; line-height: 76px; }
.user { color: #fbf4f5; font: 42px/76px "Noto Sans", sans-serif; }
.brand { color: var(--mauve); font: 700 50px/76px "Liberation Sans", sans-serif; }
.pale { color: var(--pink); }

/* dock */
.dock {
  position: absolute;
  left: 50%;
  bottom: 4px;
  z-index: 1;
  display: flex;
  align-items: center;
  width: 624px;
  height: 81px;
  margin-left: -312px;
  padding: 0 7px;
  border: 1px solid #d8caca;
  border-radius: 14px;
  background: #fefbfb;
  box-shadow: 0 0 14px 4px #f3e4e6;
}
.dock button { position: relative; flex: none; display: grid; place-items: center; width: 64px; height: 78px; padding-bottom: 2px; }
.dock .dot::after { content: ""; position: absolute; left: 30px; bottom: 3px; width: 4px; height: 4px; border-radius: 50%; background: #5c5354; }
.dock .cal { grid-template-rows: 18px 36px; height: 54px; width: 54px; margin: 0 5px 2px; padding: 0; border-radius: 10px; background: linear-gradient(#6b6162 17px, #faf3f4 17px); box-shadow: 0 0 0 1px #f5e8ea; }
.cal small { color: #d8caca; font-size: 11px; line-height: 16px; }
.cal b { font-size: 30px; font-weight: 400; line-height: 34px; }
.bigobs { color: #f5e8ea; }
.rule { flex: none; width: 1px; height: 64px; margin: 0 15px; background: var(--mauve); }
.dock .pointer { left: 297px; top: 40px; width: 24px; height: 32px; color: #fff; --edge: #1a1a1a; }
```
